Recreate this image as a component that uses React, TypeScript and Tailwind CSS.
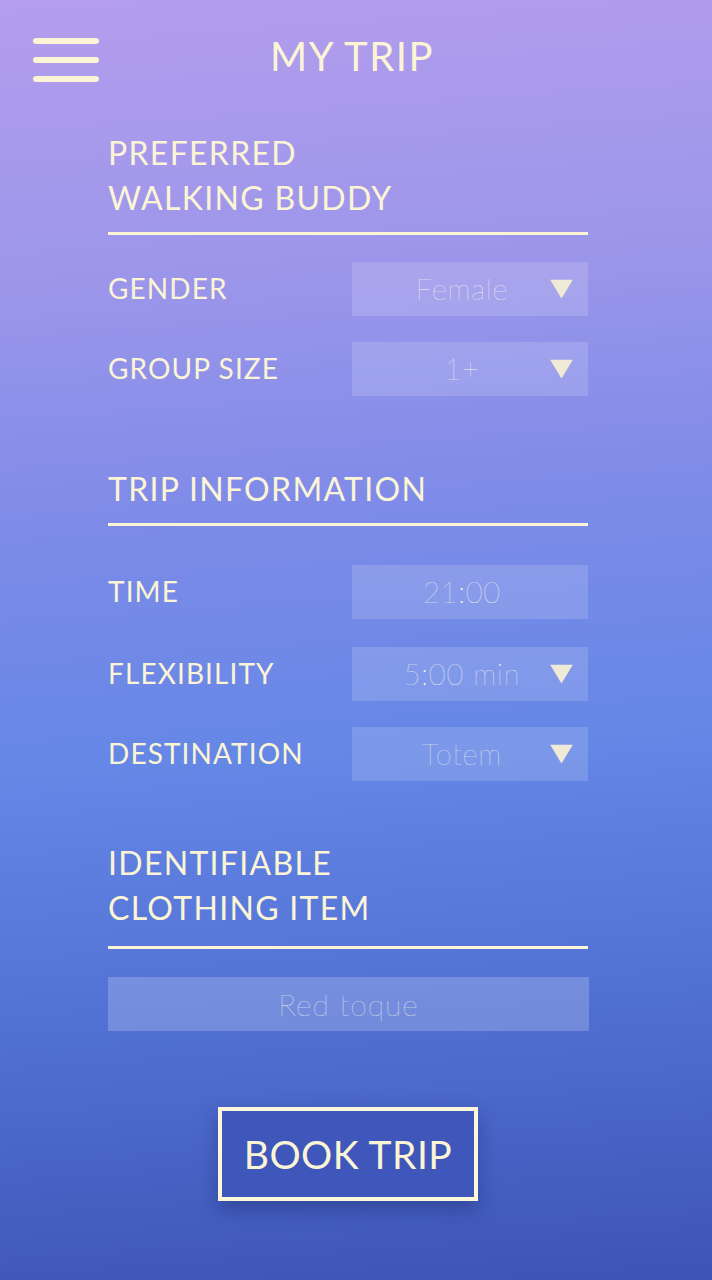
import { ReactNode } from "react";

const cream = "text-[#fbf5d6]";

function Arrow() {
  return (
    <svg width="23" height="19" viewBox="0 0 23 19" className="absolute right-[15px] top-1/2 -translate-y-1/2">
      <polygon points="0,0 23,0 11.5,19" fill="#eeead6" />
    </svg>
  );
}

function Field({ value, arrow = true }: { value: string; arrow?: boolean }) {
  return (
    <div className="relative flex h-[54px] w-[236px] items-center justify-center bg-white/15 pr-[16px]">
      <span className="text-[29px] font-thin tracking-[0.8px] text-[#fffbe6]/95">{value}</span>
      {arrow && <Arrow />}
    </div>
  );
}

function Row({ label, children, className = "" }: { label: string; children: ReactNode; className?: string }) {
  return (
    <div className={`flex items-center justify-between ${className}`}>
      <span className={`-mt-[3px] text-[28px] leading-none tracking-[1.1px] ${cream}`}>{label}</span>
      {children}
    </div>
  );
}

function Heading({ lines, className = "" }: { lines: string[]; className?: string }) {
  return (
    <div className={className}>
      <h2 className={`text-[32px] leading-[45px] tracking-[1.3px] ${cream}`}>
        {lines.map((l) => (
          <div key={l}>{l}</div>
        ))}
      </h2>
    </div>
  );
}

function Rule({ className = "" }: { className?: string }) {
  return <div className={`h-[3px] w-full bg-[#fbf5d6] ${className}`} />;
}

export default function App() {
  return (
    <div
      className="min-h-[1280px] w-full bg-[linear-gradient(176deg,#b49ded_0%,#9b96ea_22%,#7e8be8_40%,#6587e6_58%,#5170d4_78%,#3d54b4_100%)]"
      style={{ fontFamily: "Lato, 'Noto Sans', sans-serif" }}
    >
      {/* header */}
      <div className="grid grid-cols-[1fr_auto_1fr] items-start pt-[32px]">
        <div className="ml-[33px] mt-[6px] flex w-[66px] flex-col gap-[13px]">
          <div className="h-[6px] rounded-full bg-[#fbf5d6]" />
          <div className="h-[6px] rounded-full bg-[#fbf5d6]" />
          <div className="h-[6px] rounded-full bg-[#fbf5d6]" />
        </div>
        <h1 className={`-ml-[8px] text-[40px] leading-[48px] tracking-[1.5px] ${cream}`}>MY TRIP</h1>
        <div />
      </div>

      <div className="ml-[108px] w-[480px] pb-[80px]">
        <Heading lines={["PREFERRED", "WALKING BUDDY"]} className="mt-[48px]" />
        <Rule className="mt-[12px]" />
        <Row label="GENDER" className="mt-[27px]">
          <Field value="Female" />
        </Row>
        <Row label="GROUP SIZE" className="mt-[26px]">
          <Field value="1+" />
        </Row>

        <Heading lines={["TRIP INFORMATION"]} className="mt-[70px]" />
        <Rule className="mt-[12px]" />
        <Row label="TIME" className="mt-[39px]">
          <Field value="21:00" arrow={false} />
        </Row>
        <Row label="FLEXIBILITY" className="mt-[28px]">
          <Field value="5:00 min" />
        </Row>
        <Row label="DESTINATION" className="mt-[26px]">
          <Field value="Totem" />
        </Row>

        <Heading lines={["IDENTIFIABLE", "CLOTHING ITEM"]} className="mt-[59px]" />
        <Rule className="mt-[16px]" />
        <div className="mt-[28px] flex h-[54px] w-[481px] items-center justify-center bg-white/20">
          <span className="text-[30px] font-thin tracking-[1px] text-[#fffbe6]/95">Red toque</span>
        </div>

        <div className="mt-[76px] flex justify-center">
          <button className="flex h-[94px] w-[260px] items-center justify-center border-[4px] border-[#fcf6da] bg-[#3f57ba] shadow-[0_8px_18px_rgba(20,30,90,0.35)]">
            <span className={`text-[39px] leading-none tracking-[0.5px] ${cream}`}>BOOK TRIP</span>
          </button>
        </div>
      </div>
    </div>
  );
}
